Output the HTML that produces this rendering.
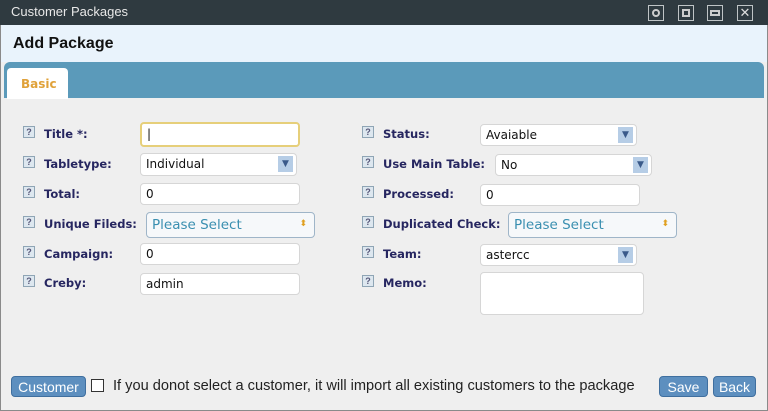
<!DOCTYPE html><html><head><meta charset="utf-8"><style>
*{box-sizing:border-box;margin:0;padding:0}
body{width:768px;height:411px;overflow:hidden;background:#efefef;font-family:"DejaVu Sans","Liberation Sans",sans-serif;position:relative}
.a{position:absolute}
#win{left:0;top:0;width:768px;height:411px;border:1px solid #8a8a8a;background:#efefef}
#tb{left:0;top:0;width:768px;height:25px;background:#2f3a40;color:#e8e8e8;font:13px "Liberation Sans",sans-serif;padding:4px 0 0 11px}
.wb{top:5px;width:16px;height:16px;border:1px solid #bfc4c6;}
#hd{left:1px;top:25px;width:766px;height:37px;background:#e9f3fc;font:bold 16px "Liberation Sans",sans-serif;color:#111;padding:10px 0 0 12px}
#tabs{left:4px;top:62px;width:760px;height:36px;background:#5b9aba;border-radius:6px 6px 0 0}
#tab{left:7px;top:68px;width:61px;height:31px;background:#fff;border-radius:4px 4px 0 0;color:#e0a23a;font-size:12px;font-weight:bold;padding:9px 0 0 14px}
.q{width:12px;height:12px;border:1px solid #8fa5b5;background:#dde7ef;font:bold 9px sans-serif;color:#557;text-align:center;line-height:10px}
.l{font-size:11.5px;font-weight:bold;color:#262660}
.i{background:#fff;border:1px solid #d6d6d6;border-radius:4px;font-size:12px;color:#111;padding:3px 0 0 5px}
.s .ar{position:absolute;right:3px;top:2px;width:15px;height:16px;background:#b6cde6;color:#3a5a8a;font-size:9px;text-align:center;line-height:16px}
.ps{background:#f6f8fa;border:1px solid #9fb5c8;border-radius:4px;color:#3a8fb0;font-size:13.5px;padding:4px 0 0 5px}
.ps:after{content:"⬍";position:absolute;right:7px;top:6px;font-size:9px;color:#e0a020}
.btn{background:#5d8fbf;border:1px solid #3f6f9f;border-radius:4px;color:#fff;font:14px "Liberation Sans",sans-serif;text-align:center;padding-top:2px}
</style></head><body>
<div id="win" class="a"></div>
<div id="tb" class="a">Customer Packages</div>
<div class="a wb" style="left:648px"><div class="a" style="left:3px;top:3px;width:8px;height:8px;border:2px solid #ccc;border-radius:50%"></div></div>
<div class="a wb" style="left:678px"><div class="a" style="left:3px;top:3px;width:8px;height:8px;border:2px solid #ccc"></div></div>
<div class="a wb" style="left:707px"><div class="a" style="left:2px;top:4px;width:10px;height:6px;border:2px solid #ccc"></div></div>
<div class="a wb" style="left:737px;color:#ddd;font:13px sans-serif;text-align:center;line-height:14px">✕</div>
<div id="hd" class="a">Add Package</div>
<div id="tabs" class="a"></div>
<div id="tab" class="a">Basic</div>

<div class="a q" style="left:23px;top:126px">?</div><div class="a l" style="left:44px;top:127px">Title *:</div>
<div class="a i" style="left:140px;top:122px;width:160px;height:25px;border:2px solid #e6cf7a">|</div>
<div class="a q" style="left:23px;top:156px">?</div><div class="a l" style="left:44px;top:157px">Tabletype:</div>
<div class="a i s" style="left:140px;top:153px;width:157px;height:23px">Individual<div class="ar">▼</div></div>
<div class="a q" style="left:23px;top:186px">?</div><div class="a l" style="left:44px;top:187px">Total:</div>
<div class="a i" style="left:140px;top:183px;width:160px;height:22px">0</div>
<div class="a q" style="left:23px;top:216px">?</div><div class="a l" style="left:44px;top:217px">Unique Fileds:</div>
<div class="a ps" style="left:146px;top:212px;width:169px;height:26px">Please Select</div>
<div class="a q" style="left:23px;top:246px">?</div><div class="a l" style="left:44px;top:247px">Campaign:</div>
<div class="a i" style="left:140px;top:243px;width:160px;height:22px">0</div>
<div class="a q" style="left:23px;top:275px">?</div><div class="a l" style="left:44px;top:276px">Creby:</div>
<div class="a i" style="left:140px;top:273px;width:160px;height:22px">admin</div>

<div class="a q" style="left:362px;top:126px">?</div><div class="a l" style="left:383px;top:127px">Status:</div>
<div class="a i s" style="left:480px;top:124px;width:157px;height:22px">Avaiable<div class="ar">▼</div></div>
<div class="a q" style="left:362px;top:156px">?</div><div class="a l" style="left:383px;top:157px">Use Main Table:</div>
<div class="a i s" style="left:495px;top:154px;width:157px;height:22px">No<div class="ar">▼</div></div>
<div class="a q" style="left:362px;top:186px">?</div><div class="a l" style="left:383px;top:187px">Processed:</div>
<div class="a i" style="left:480px;top:184px;width:160px;height:22px">0</div>
<div class="a q" style="left:362px;top:216px">?</div><div class="a l" style="left:383px;top:217px">Duplicated Check:</div>
<div class="a ps" style="left:508px;top:212px;width:169px;height:26px">Please Select</div>
<div class="a q" style="left:362px;top:246px">?</div><div class="a l" style="left:383px;top:247px">Team:</div>
<div class="a i s" style="left:480px;top:244px;width:157px;height:22px">astercc<div class="ar">▼</div></div>
<div class="a q" style="left:362px;top:275px">?</div><div class="a l" style="left:383px;top:276px">Memo:</div>
<div class="a i" style="left:480px;top:272px;width:164px;height:43px"></div>

<div class="a btn" style="left:11px;top:376px;width:75px;height:21px">Customer</div>
<div class="a" style="left:91px;top:379px;width:13px;height:13px;border:1px solid #333;background:#fff"></div>
<div class="a" style="left:113px;top:378px;font:14.6px 'Liberation Sans',sans-serif;color:#222;white-space:nowrap">If you donot select a customer, it will import all existing customers to the package</div>
<div class="a btn" style="left:659px;top:376px;width:49px;height:21px">Save</div>
<div class="a btn" style="left:713px;top:376px;width:43px;height:21px">Back</div>
</body></html>
